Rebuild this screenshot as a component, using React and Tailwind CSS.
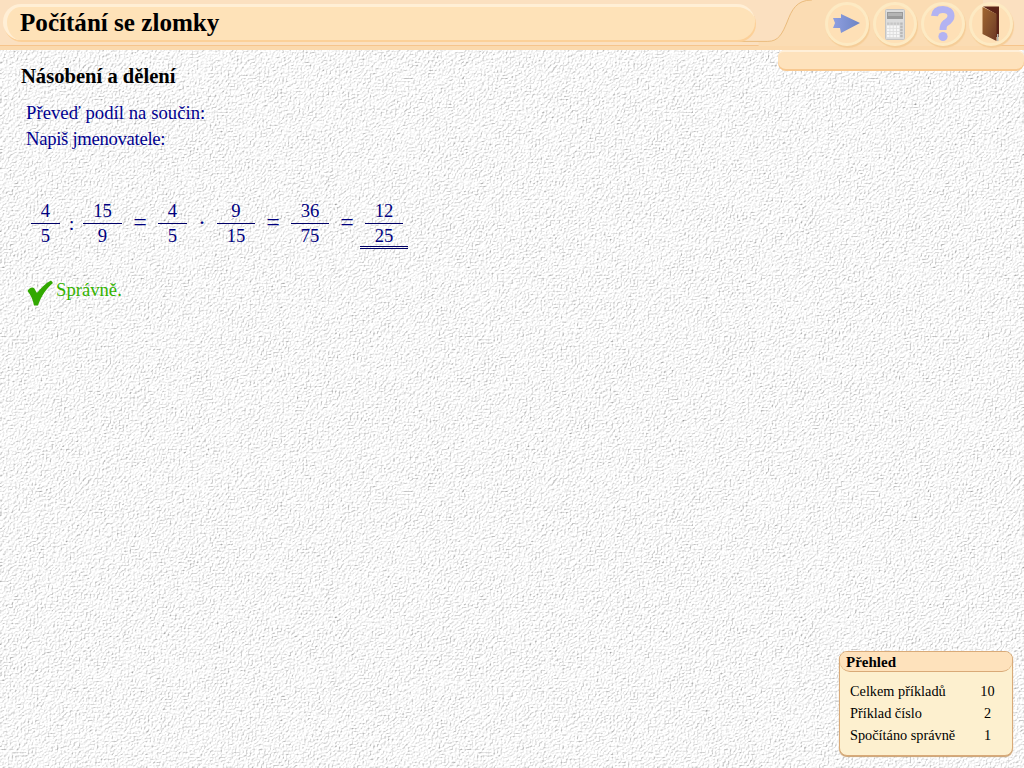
const serif = "font-['Liberation_Serif','Times_New_Roman',serif]";

function Texture() {
  return (
    <svg className="absolute inset-0 w-full h-full -z-10" aria-hidden="true">
      <filter id="paper" x="0" y="0" width="100%" height="100%">
        <feTurbulence type="fractalNoise" baseFrequency="0.55 0.62" numOctaves="2" seed="7" />
        <feDiffuseLighting surfaceScale="1.7" diffuseConstant="1.14" lightingColor="#ffffff">
          <feDistantLight azimuth="225" elevation="58" />
        </feDiffuseLighting>
      </filter>
      <rect width="100%" height="100%" filter="url(#paper)" />
    </svg>
  );
}

function HeaderShape() {
  return (
    <svg className="absolute inset-0 w-full h-full" viewBox="0 0 1024 50" aria-hidden="true">
      <path d="M790 45 C802 45 806 36 811 24 C816 11 821 0 838 0 L1024 0 L1024 50 L780 50 L780 45 Z" fill="#fbdcb3" />
      <path d="M757 45 L790 45 C802 45 806 36 811 24 C816 11 821 0 838 0" fill="none" stroke="#e8b878" strokeWidth="1" />
    </svg>
  );
}

function RoundButton({ children }) {
  return (
    <div className="w-[44px] h-[44px] rounded-full bg-[#fee0b6] border-[3px] border-[#fdeac3] shadow-[1px_2px_1px_#f5cd98] flex items-center justify-center">
      {children}
    </div>
  );
}

function ArrowIcon() {
  return (
    <svg width="30" height="22" viewBox="0 0 30 22" className="shrink-0">
      <defs>
        <linearGradient id="arrowG" x1="0" y1="0" x2="1" y2="0">
          <stop offset="0" stopColor="#8f9fe0" />
          <stop offset="1" stopColor="#6d84c4" />
        </linearGradient>
      </defs>
      <path d="M1 5 L9 5 L9 1 L28 10 L9 20 L8 15 L1 15 L3 10 Z" fill="url(#arrowG)" />
    </svg>
  );
}

function CalcIcon() {
  const keys = [];
  for (let r = 0; r < 5; r++) {
    for (let c = 0; c < 5; c++) {
      keys.push(<rect key={`${r}-${c}`} x={2 + c * 3.3} y={13.5 + r * 3.1} width="2.5" height="2.3" fill={c === 4 ? "#b8b8b8" : r === 0 ? "#c6c6c6" : "#f6f6f6"} />);
    }
  }
  return (
    <svg width="20" height="31" viewBox="0 0 20 31" className="shrink-0">
      <rect x="0.5" y="0.5" width="19" height="30" rx="1" fill="#dcdcdc" stroke="#c4c4c4" />
      <rect x="2" y="3" width="16" height="7" fill="#9a9a9a" />
      <rect x="3" y="4" width="14" height="3" fill="#b4b4b4" />
      {keys}
    </svg>
  );
}

function HelpIcon() {
  return (
    <svg width="26" height="36" viewBox="0 0 26 36" className="shrink-0">
      <path d="M4.5 10 C5 5 9 3.5 13 3.5 C18 3.5 21 6 21 10 C21 14 18 15.5 15.5 17 C13.5 18.5 13 20 13 24" fill="none" stroke="#b3b3f2" strokeWidth="7" />
      <circle cx="13" cy="30.5" r="4.6" fill="#b3b3f2" />
    </svg>
  );
}

function DoorIcon() {
  return (
    <svg width="18" height="36" viewBox="0 0 18 36" className="shrink-0">
      <defs>
        <linearGradient id="doorG" x1="0" y1="0" x2="1" y2="1">
          <stop offset="0" stopColor="#a2662f" />
          <stop offset="0.55" stopColor="#84502c" />
          <stop offset="1" stopColor="#6d3524" />
        </linearGradient>
      </defs>
      <path d="M1 0.5 L17 0.5 L17 31 L14 31 L14 8 Z" fill="#5b2418" />
      <path d="M0.5 1 L14.5 8 L14.5 35 L0.5 28 Z" fill="url(#doorG)" />
      <path d="M15 28 L16.5 28 L16.5 35 L15 35 Z" fill="#b8b8b0" />
    </svg>
  );
}

function CheckIcon() {
  return (
    <svg className="shrink-0" width="27" height="26" viewBox="0 0 27 26">
      <path d="M1.5 11 C3 8 6 6.5 8 8 L11 13 C15 8 20 3 25 0.5 L27 3 C21 8 15 16 12 25.5 L8 25.5 C7 20 5 15 1.5 11 Z" fill="#31a800" />
    </svg>
  );
}

function Fraction({ n, d, w, extra }) {
  return (
    <div className="relative flex flex-col items-center shrink-0" style={{ width: w }}>
      <div className="h-[27px] leading-[28px] w-full text-center border-b border-[#000066]">{n}</div>
      <div className="h-[26px] leading-[24px]">{d}</div>
      {extra}
    </div>
  );
}

function Op({ w, children }) {
  return <div className="text-center shrink-0 self-center" style={{ width: w }}>{children}</div>;
}

function Row({ label, value }) {
  return (
    <div className="flex h-[22px] items-center">
      <span className="w-[123px] whitespace-nowrap">{label}</span>
      <span className="w-[29px] text-center">{value}</span>
    </div>
  );
}

export default function App() {
  return (
    <div className={`relative isolate w-[1024px] h-[768px] overflow-hidden flex flex-col text-black ${serif}`}>
      <Texture />
      <header className="relative shrink-0 h-[50px] bg-[#fbe0c0] border-b-[4px] border-[#fbd9ad] shadow-[inset_0_-1px_0_#f6c48c]">
        <HeaderShape />
        <div className="relative flex items-start justify-between">
          <div className="ml-[3px] mt-[4px] w-[752px] h-[36px] rounded-full bg-[#fee2b8] border-t-[3px] border-l-[4px] border-[#ffefd6] shadow-[1px_2px_0_#fcd098] flex items-center pl-[13px] pb-[2px]">
            <h1 className="text-[25.1px] font-bold leading-none">Počítání se zlomky</h1>
          </div>
          <div className="flex gap-[4px] mt-[2px] mr-[11px]">
            <RoundButton><ArrowIcon /></RoundButton>
            <RoundButton><CalcIcon /></RoundButton>
            <RoundButton><HelpIcon /></RoundButton>
            <RoundButton><DoorIcon /></RoundButton>
          </div>
        </div>
      </header>
      <div className="absolute top-[50px] right-0 w-[246px] h-[19px] rounded-b-[8px] rounded-t-[6px] bg-[#fee2bc] border-t-2 border-[#ffefd8] shadow-[0_2px_0_#f8c890]" />

      <main className="flex-1 flex flex-col min-h-0">
        <h2 className="ml-[21px] mt-[14px] text-[20.6px] font-bold leading-[24px]">Násobení a dělení</h2>
        <div className="ml-[26px] mt-[12px] text-[18.67px] leading-[26px] text-[#000090]">
          <p className="tracking-[0.04px]">Převeď podíl na součin:</p>
          <p className="tracking-[-0.3px]">Napiš jmenovatele:</p>
        </div>
        <div className="ml-[31px] mt-[45px] flex text-[18.67px] text-[#000080]">
          <Fraction n="4" d="5" w={29} />
          <Op w={23}>:</Op>
          <Fraction n="15" d="9" w={39} />
          <Op w={36}><span className="text-[24px] leading-none">=</span></Op>
          <Fraction n="4" d="5" w={29} />
          <Op w={30}><span className="text-[24px] leading-none">·</span></Op>
          <Fraction n="9" d="15" w={38} />
          <Op w={36}><span className="text-[24px] leading-none">=</span></Op>
          <Fraction n="36" d="75" w={38} />
          <Op w={36}><span className="text-[24px] leading-none">=</span></Op>
          <Fraction n="12" d="25" w={38} extra={<div className="absolute left-[-5px] right-[-5px] top-[49px] h-[3px] border-y border-[#000066]" />} />
        </div>
        <div className="ml-[26px] mt-[30px] flex items-center gap-[3px] text-[18.67px] leading-[26px] text-[#33b300]">
          <CheckIcon />
          <span className="-mt-[6px]">Správně.</span>
        </div>

        <aside className="mt-auto mb-[12px] mr-[11px] self-end w-[174px] h-[105px] rounded-[8px] bg-[#fdf0cf] border border-[#d9aa78] shadow-[0_1px_1px_#c9a070] text-[14.3px] overflow-hidden">
          <div className="h-[20px] bg-[#fee2bc] border-b border-[#d9aa78] rounded-b-[10px] pl-[6px] font-bold text-[15px] leading-[21px]">Přehled</div>
          <div className="pl-[10px] pt-[9px]">
            <Row label="Celkem příkladů" value="10" />
            <Row label="Příklad číslo" value="2" />
            <Row label="Spočítáno správně" value="1" />
          </div>
        </aside>
      </main>
    </div>
  );
}
